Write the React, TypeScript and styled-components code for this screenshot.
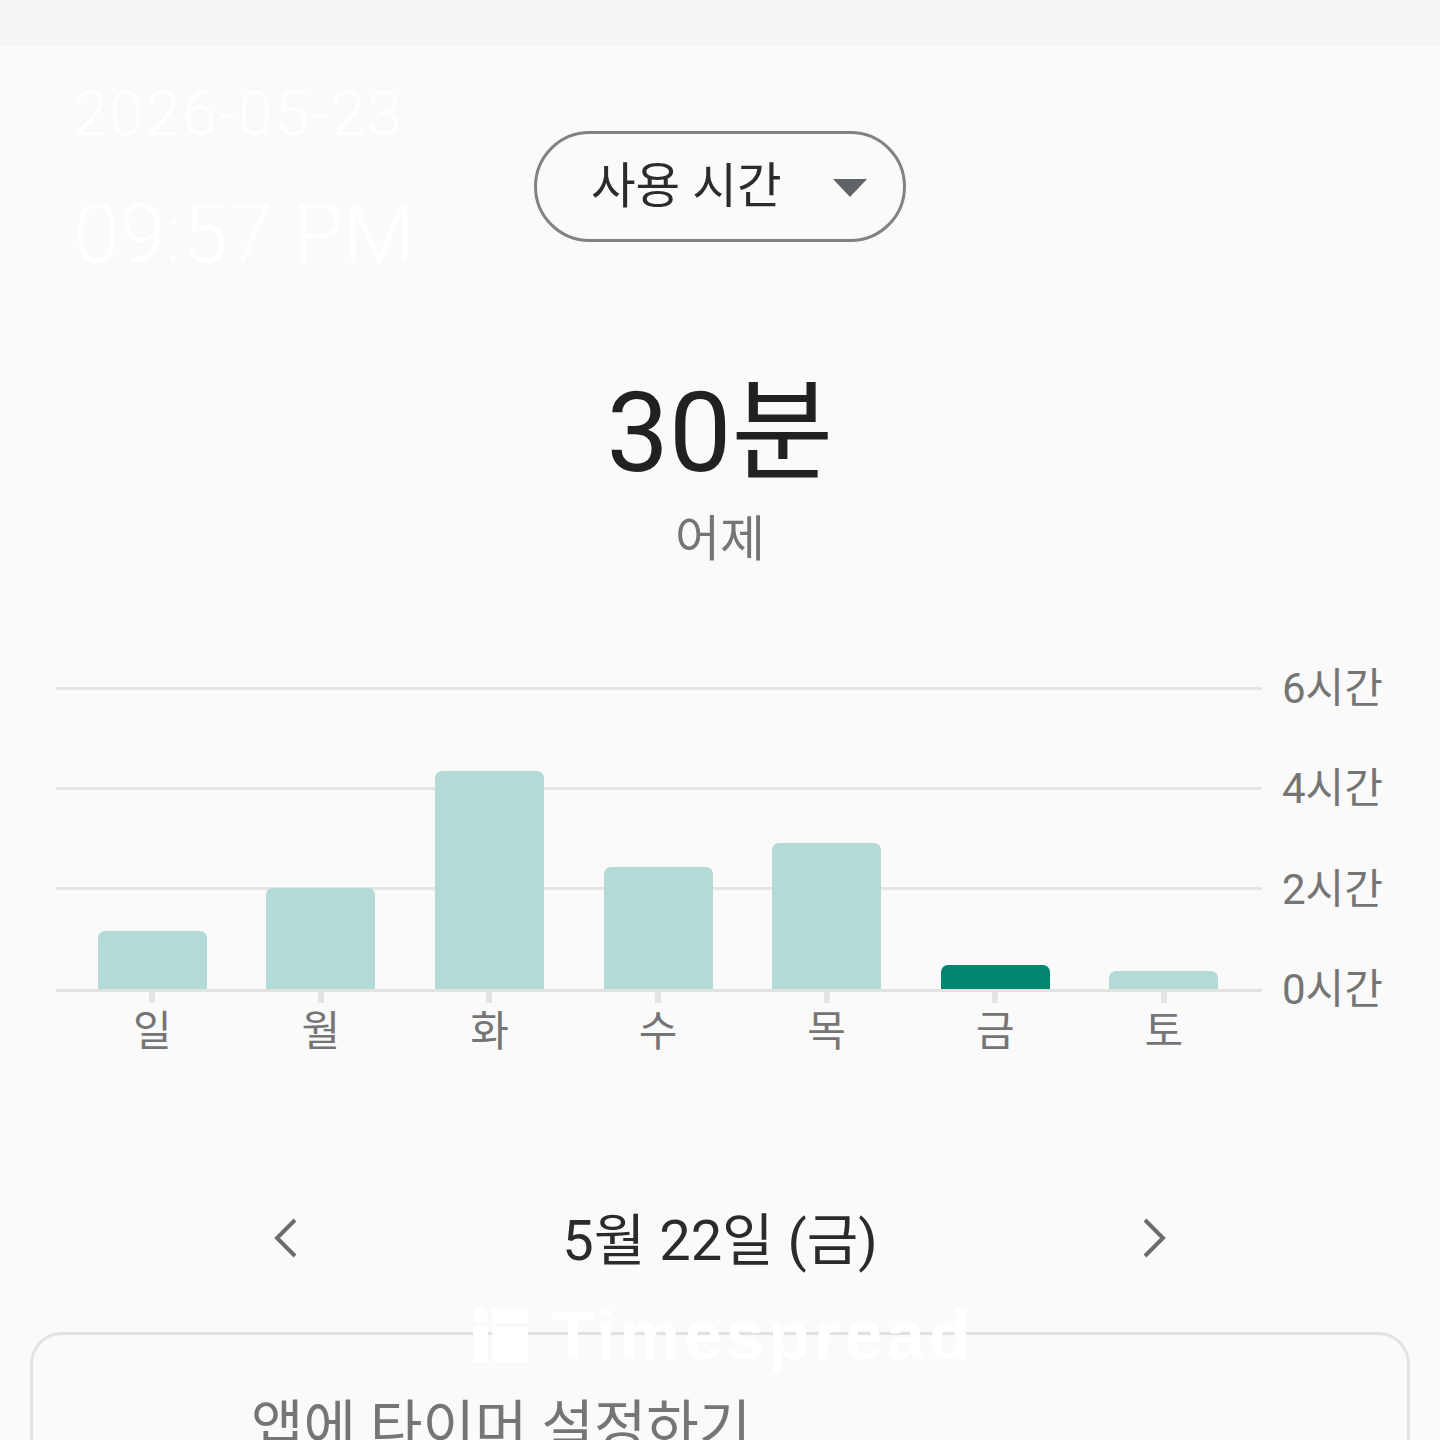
import { createGlobalStyle, styled } from "styled-components";

const GlobalStyle = createGlobalStyle`
  html, body {
    margin: 0;
    padding: 0;
    background: #fafafa;
  }
  * {
    box-sizing: border-box;
  }
`;

const fontStack = `Roboto, "Noto Sans CJK KR", sans-serif`;

const Page = styled.div`
  position: relative;
  width: 1440px;
  height: 1440px;
  overflow: hidden;
  background: #fafafa;
  font-family: ${fontStack};
`;

const StatusBar = styled.div`
  height: 46px;
  background: #f5f5f5;
`;

const StampDate = styled.div`
  position: absolute;
  left: 73px;
  top: 81px;
  font-size: 62px;
  line-height: 66px;
  font-weight: 300;
  letter-spacing: 2px;
  color: #ffffff;
`;

const StampTime = styled.div`
  position: absolute;
  left: 74px;
  top: 191px;
  font-size: 82px;
  line-height: 86px;
  font-weight: 300;
  color: #ffffff;
`;

const Brand = styled.div`
  position: absolute;
  left: 473px;
  top: 1300px;
  display: flex;
  align-items: center;
  gap: 24px;
  height: 70px;
  color: #ffffff;
  font-family: "Liberation Sans", sans-serif;
  font-size: 68px;
  font-weight: 700;
  letter-spacing: 4.2px;
`;

const DropdownRow = styled.div`
  display: flex;
  justify-content: center;
  padding-top: 85px;
`;

const Dropdown = styled.div`
  display: flex;
  align-items: center;
  justify-content: space-between;
  width: 372px;
  height: 111px;
  padding: 0 36px 10px 54px;
  border: 3px solid #808284;
  border-radius: 56px;
  color: #2b2b2b;
  font-size: 48.5px;
`;

const Caret = styled.div`
  width: 0;
  height: 0;
  margin-top: 12px;
  border-left: 17px solid transparent;
  border-right: 17px solid transparent;
  border-top: 18px solid #5f6368;
`;

const Summary = styled.div`
  display: flex;
  flex-direction: column;
  align-items: center;
  padding-top: 130px;
`;

const Total = styled.div`
  font-size: 111px;
  line-height: 122px;
  color: #212121;
`;

const TotalCaption = styled.div`
  margin-top: 19px;
  font-size: 49px;
  line-height: 54px;
  color: #757575;
`;

const Chart = styled.div`
  position: relative;
  display: grid;
  grid-template-columns: 1206px 1fr;
  margin: 120px 0 0 56px;
`;

const Plot = styled.div`
  position: relative;
  height: 305px;
  border-bottom: 3px solid #e2e2e2;
`;

const GridLine = styled.div<{ $top: number }>`
  position: absolute;
  left: 0;
  right: 0;
  top: ${(props) => props.$top}px;
  height: 3px;
  background: #e4e4e4;
`;

const Bars = styled.div`
  position: absolute;
  inset: 0;
  display: grid;
  grid-template-columns: repeat(7, 168.6px);
  padding-left: 12px;
  align-items: end;
  justify-items: center;
`;

const Bar = styled.div<{ $active?: boolean }>`
  width: 109px;
  border-radius: 7px 7px 0 0;
  background: ${(props) => (props.$active ? "#00856f" : "#b2dad6")};
`;

const Days = styled.div`
  display: grid;
  grid-template-columns: repeat(7, 168.6px);
  padding-left: 12px;
  justify-items: center;
`;

const Day = styled.div`
  display: flex;
  flex-direction: column;
  align-items: center;
  font-size: 42px;
  line-height: 50px;
  color: #757575;

  &::before {
    content: "";
    width: 6px;
    height: 11px;
    margin-bottom: 4px;
    background: #e4e4e4;
  }
`;

const Axis = styled.div`
  display: flex;
  flex-direction: column;
  justify-content: space-between;
  height: 351px;
  margin-top: -23px;
  padding-left: 20px;
  color: #757575;
  font-size: 42px;
  line-height: 50px;
`;

const DateNav = styled.div`
  display: flex;
  align-items: center;
  justify-content: space-between;
  height: 70px;
  margin-top: 146px;
  padding: 0 274px;
  color: #2b2b2b;
  font-size: 56px;
`;

const DateLabel = styled.div`
  padding-bottom: 6px;
`;

const NavIcon = styled.svg`
  width: 24px;
  height: 40px;
  fill: none;
  stroke: #6c6c6c;
  stroke-width: 4;
`;

const TimerCard = styled.div`
  margin: 59px 30px 0;
  height: 260px;
  padding: 63px 0 0 218px;
  border: 3px solid #e2e2e2;
  border-radius: 32px;
  color: #757575;
  font-size: 57px;
  line-height: 60px;
  white-space: nowrap;
`;

const axisLabels = ["6시간", "4시간", "2시간", "0시간"];
const gridTops = [0, 100, 200];
const days = [
  { label: "일", height: 58 },
  { label: "월", height: 101 },
  { label: "화", height: 218 },
  { label: "수", height: 122 },
  { label: "목", height: 146 },
  { label: "금", height: 24, active: true },
  { label: "토", height: 18 },
];

export default function App() {
  return (
    <Page>
      <GlobalStyle />
      <StatusBar />
      <DropdownRow>
        <Dropdown>
          사용 시간
          <Caret />
        </Dropdown>
      </DropdownRow>
      <Summary>
        <Total>30분</Total>
        <TotalCaption>어제</TotalCaption>
      </Summary>
      <Chart>
        <div>
          <Plot>
            {gridTops.map((top) => (
              <GridLine key={top} $top={top} />
            ))}
            <Bars>
              {days.map((day) => (
                <Bar
                  key={day.label}
                  $active={day.active}
                  style={{ height: day.height }}
                />
              ))}
            </Bars>
          </Plot>
          <Days>
            {days.map((day) => (
              <Day key={day.label}>{day.label}</Day>
            ))}
          </Days>
        </div>
        <Axis>
          {axisLabels.map((label) => (
            <div key={label}>{label}</div>
          ))}
        </Axis>
      </Chart>
      <DateNav>
        <NavIcon viewBox="0 0 24 40">
          <path d="M21 2 L3 20 L21 38" />
        </NavIcon>
        <DateLabel>5월 22일 (금)</DateLabel>
        <NavIcon viewBox="0 0 24 40">
          <path d="M3 2 L21 20 L3 38" />
        </NavIcon>
      </DateNav>
      <TimerCard>앱에 타이머 설정하기</TimerCard>
      <StampDate>2026-05-23</StampDate>
      <StampTime>09:57 PM</StampTime>
      <Brand>
        <svg width="55" height="54" viewBox="0 0 55 54" fill="#ffffff">
          <circle cx="7.5" cy="7.5" r="7.5" />
          <rect x="0" y="19" width="15" height="35" />
          <rect x="19" y="0" width="36" height="15" />
          <rect x="19" y="19" width="36" height="35" />
        </svg>
        Timespread
      </Brand>
    </Page>
  );
}
